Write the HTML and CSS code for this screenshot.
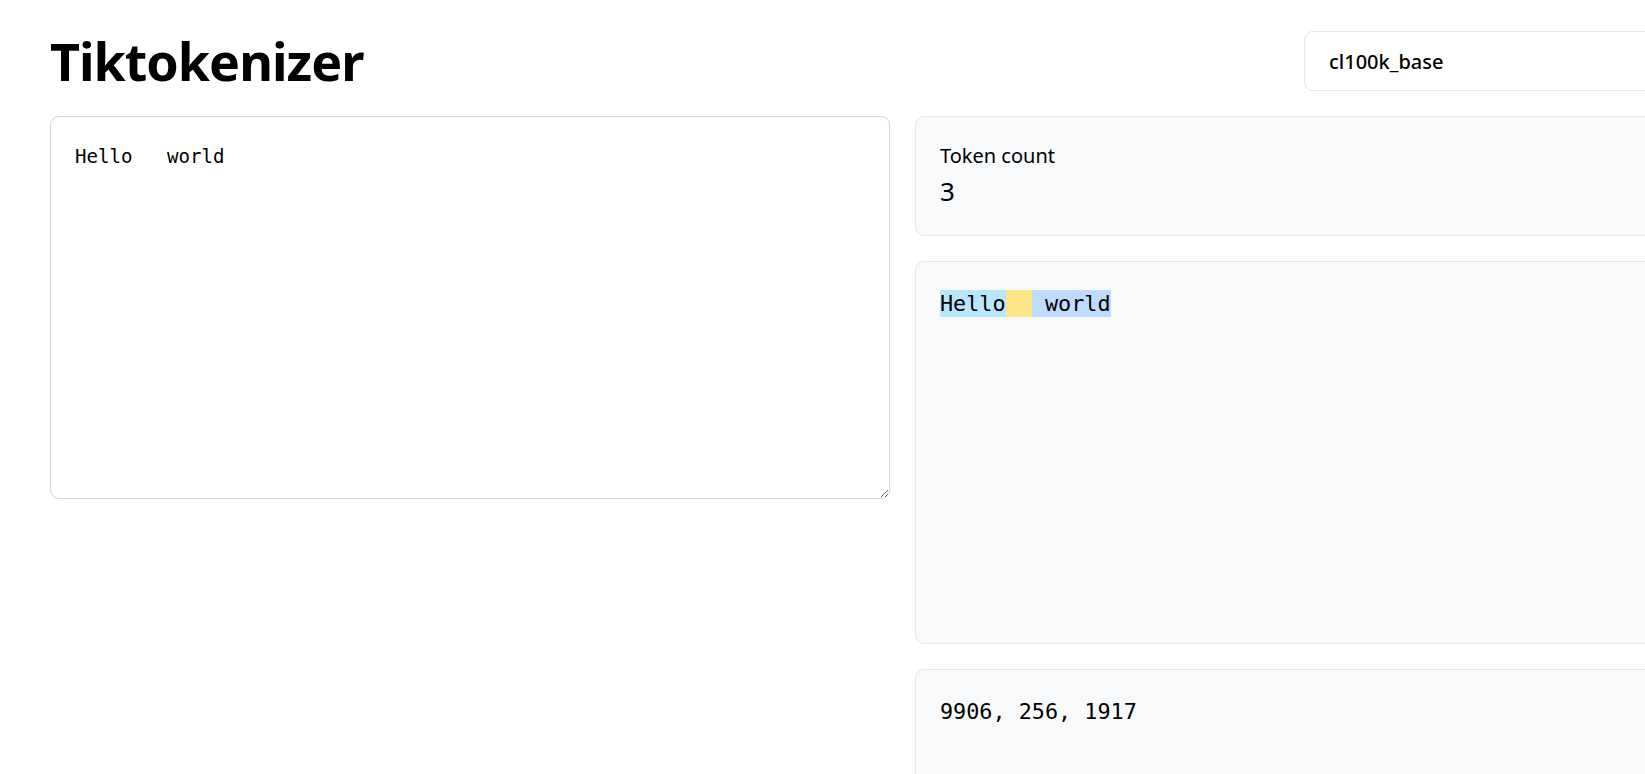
FILE: index.html
```html
<!DOCTYPE html>
<html lang="en">
<head>
<meta charset="utf-8">
<title>Tiktokenizer</title>
<link rel="stylesheet" href="styles.css">
</head>
<body>
<main class="page">
  <header class="header">
    <h1 class="title">Tiktokenizer</h1>
    <select class="encoder">
      <option>cl100k_base</option>
      <option>p50k_base</option>
      <option>r50k_base</option>
    </select>
  </header>
  <section class="workspace">
    <div class="editor">
      <textarea class="input" spellcheck="false">Hello   world</textarea>
    </div>
    <div class="side">
      <div class="card stat-card">
        <div class="stat-label">Token count</div>
        <div class="stat-value">3</div>
      </div>
      <div class="card tokens-card">
        <pre class="tokens"><span class="tok tok-a">Hello</span><span class="tok tok-b">  </span><span class="tok tok-c"> world</span></pre>
      </div>
      <div class="card ids-card">
        <pre class="ids">9906, 256, 1917</pre>
      </div>
    </div>
  </section>
</main>
</body>
</html>
```
FILE: styles.css
```css
html, body {
  margin: 0;
  padding: 0;
  overflow: hidden;
  background: #ffffff;
}

body {
  font-family: "Noto Sans", "Open Sans", sans-serif;
  color: #000000;
}

.page {
  width: 1705px;
  padding: 31px 0 0 50px;
  display: flex;
  flex-direction: column;
  gap: 25px;
}

.header {
  display: flex;
  justify-content: space-between;
  align-items: center;
  height: 60px;
}

.title {
  margin: 0;
  font-size: 52px;
  line-height: 60px;
  font-weight: 700;
  letter-spacing: -1px;
}

.encoder {
  appearance: none;
  -webkit-appearance: none;
  box-sizing: border-box;
  width: 451px;
  height: 60px;
  padding: 0 24px;
  border: 1px solid #e2e8f0;
  border-radius: 9px;
  background: #ffffff;
  font-family: "Noto Sans", "Open Sans", sans-serif;
  font-size: 20px;
  font-weight: 500;
  color: #000000;
}

.workspace {
  display: grid;
  grid-template-columns: 840px 840px;
  gap: 25px;
  align-items: start;
}

.input {
  display: block;
  box-sizing: border-box;
  width: 100%;
  height: 383px;
  margin: 0;
  padding: 25px 24px 24px;
  border: 1px solid #cbd5e1;
  border-radius: 9px;
  font-family: "DejaVu Sans Mono", monospace;
  font-size: 19.1px;
  line-height: 30px;
  color: #000000;
  background: #ffffff;
  outline: none;
}

.side {
  display: flex;
  flex-direction: column;
  gap: 25px;
}

.card {
  box-sizing: border-box;
  padding: 24px;
  border: 1px solid #e5e7eb;
  border-radius: 9px;
  background: #f8f9fb;
}

.stat-label {
  font-size: 20px;
  line-height: 30px;
}

.stat-value {
  font-size: 26px;
  line-height: 40px;
}

.tokens-card {
  min-height: 383px;
}

.ids-card {
  min-height: 200px;
}

.tokens, .ids {
  margin: 0;
  font-family: "DejaVu Sans Mono", monospace;
  font-size: 21.8px;
  line-height: 36px;
  white-space: pre-wrap;
}

.tok {
  padding: 1px 0;
}

.tok-a { background: #bae6fd; }
.tok-b { background: #fde68a; }
.tok-c { background: #bfdbfe; }
```
